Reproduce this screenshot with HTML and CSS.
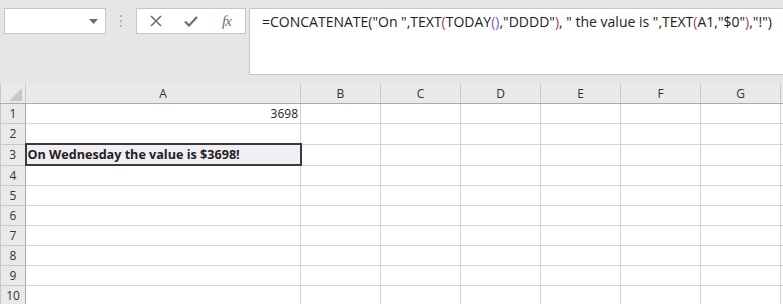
FILE: index.html
```html
<!DOCTYPE html>
<html lang="en">
<head>
    <meta charset="UTF-8">
    <title>Sheet</title>
    <link rel="stylesheet" href="styles.css">
</head>
<body>
    <!-- formula bar -->
    <div class="toolbar">
        <div class="namebox">
            <svg class="drop" width="9" height="5" viewBox="0 0 9 5"><path d="M0 0h9L4.5 5z" fill="#6b6b6b"/></svg>
        </div>
        <div class="grip"><span></span><span></span><span></span></div>
        <div class="buttons">
            <svg width="12" height="12" viewBox="0 0 12 12"><path d="M1 1l10 10M11 1L1 11" stroke="#6e6e6e" stroke-width="1.6"/></svg>
            <svg class="ok" width="14" height="11" viewBox="0 0 14 11"><path d="M1 5.5l4 4L13 1" stroke="#6e6e6e" stroke-width="2.2" fill="none"/></svg>
            <span class="fx">fx</span>
        </div>
        <div class="formula">=CONCATENATE("On ",TEXT<span class="p2">(</span>TODAY<span class="p3">()</span>,"DDDD"<span class="p2">)</span>, " the value is ",TEXT<span class="p2">(</span>A1,"$0"<span class="p2">)</span>,"!")</div>
    </div>
    <!-- worksheet -->
    <table class="sheet">
        <colgroup>
            <col class="c-row"><col class="c-a"><col><col><col><col><col><col><col class="c-h">
        </colgroup>
        <tr class="head">
            <th class="corner"><span class="tri"></span></th>
            <th>A</th><th>B</th><th>C</th><th>D</th><th>E</th><th>F</th><th>G</th><th></th>
        </tr>
        <tr><th>1</th><td class="num">3698</td><td></td><td></td><td></td><td></td><td></td><td></td><td></td></tr>
        <tr><th>2</th><td></td><td></td><td></td><td></td><td></td><td></td><td></td><td></td></tr>
        <tr><th>3</th><td class="active">On Wednesday the value is $3698!</td><td></td><td></td><td></td><td></td><td></td><td></td><td></td></tr>
        <tr><th>4</th><td></td><td></td><td></td><td></td><td></td><td></td><td></td><td></td></tr>
        <tr><th>5</th><td></td><td></td><td></td><td></td><td></td><td></td><td></td><td></td></tr>
        <tr><th>6</th><td></td><td></td><td></td><td></td><td></td><td></td><td></td><td></td></tr>
        <tr><th>7</th><td></td><td></td><td></td><td></td><td></td><td></td><td></td><td></td></tr>
        <tr><th>8</th><td></td><td></td><td></td><td></td><td></td><td></td><td></td><td></td></tr>
        <tr><th>9</th><td></td><td></td><td></td><td></td><td></td><td></td><td></td><td></td></tr>
        <tr><th>10</th><td></td><td></td><td></td><td></td><td></td><td></td><td></td><td></td></tr>
    </table>
</body>
</html>
```
FILE: styles.css
```css
body {
    margin: 0;
    background: #e6e6e6;
    overflow: hidden;
    font-family: 'Open Sans', sans-serif;
}
/* Formula bar */
.toolbar {
    display: flex;
    align-items: flex-start;
    height: 84px;
    padding: 8px 0 0 4px;
    box-sizing: border-box;
}
.namebox {
    width: 100px;
    height: 24px;
    background: #fff;
    border: 1px solid #c6c6c6;
    position: relative;
}
.namebox .drop {
    position: absolute;
    right: 7px;
    top: 10px;
}
.grip {
    width: 30px;
    display: flex;
    flex-direction: column;
    align-items: center;
    gap: 3px;
    padding-top: 7px;
}
.grip span {
    width: 2px;
    height: 2px;
    background: #b4b4b4;
}
.buttons {
    width: 95px;
    height: 24px;
    background: #fff;
    border: 1px solid #c6c6c6;
    display: flex;
    align-items: center;
    padding: 0 0 0 13px;
}
.buttons .ok {
    margin-left: 22px;
}
.fx {
    margin-left: 24px;
    font-family: 'Liberation Serif', serif;
    font-style: italic;
    font-size: 15px;
    color: #6e6e6e;
    letter-spacing: -1px;
}
.formula {
    flex: 1;
    height: 62px;
    margin-left: 3px;
    background: #fff;
    border: 1px solid #c6c6c6;
    border-right: none;
    padding: 3px 0 0 12px;
    font-size: 14px;
    color: #222;
    white-space: nowrap;
    overflow: hidden;
}
.p2 { color: #b3395a; }
.p3 { color: #8a4fc0; }
/* Worksheet grid */
.sheet {
    border-collapse: collapse;
    table-layout: fixed;
    width: 860px;
    background: #fff;
    font-size: 12px;
    color: #222;
}
.sheet col { width: 80px; }
.sheet col.c-row { width: 25px; }
.sheet col.c-a { width: 275px; }
.sheet td, .sheet th {
    height: 19px;
    padding: 0 2px;
    border: 1px solid #d4d4d4;
    white-space: nowrap;
    overflow: hidden;
}
.sheet th {
    background: #e9e9e9;
    font-weight: normal;
    color: #333;
    border-color: #c8c8c8;
    border-right-color: #ababab;
}
.sheet tr.head th {
    border-top: none;
    border-bottom-color: #ababab;
    border-right-color: #c8c8c8;
}
.sheet tr.head th.corner {
    position: relative;
}
.tri {
    position: absolute;
    right: 3px;
    bottom: 2px;
    border-style: solid;
    border-width: 0 0 13px 13px;
    border-color: transparent transparent #c8c8c8 transparent;
}
.sheet td.num { text-align: right; }
.sheet td.active {
    font-weight: bold;
    font-size: 12.6px;
    padding-left: 1px;
    background: #f1eff3;
    border: 2px solid #3a3a3a;
}
```
